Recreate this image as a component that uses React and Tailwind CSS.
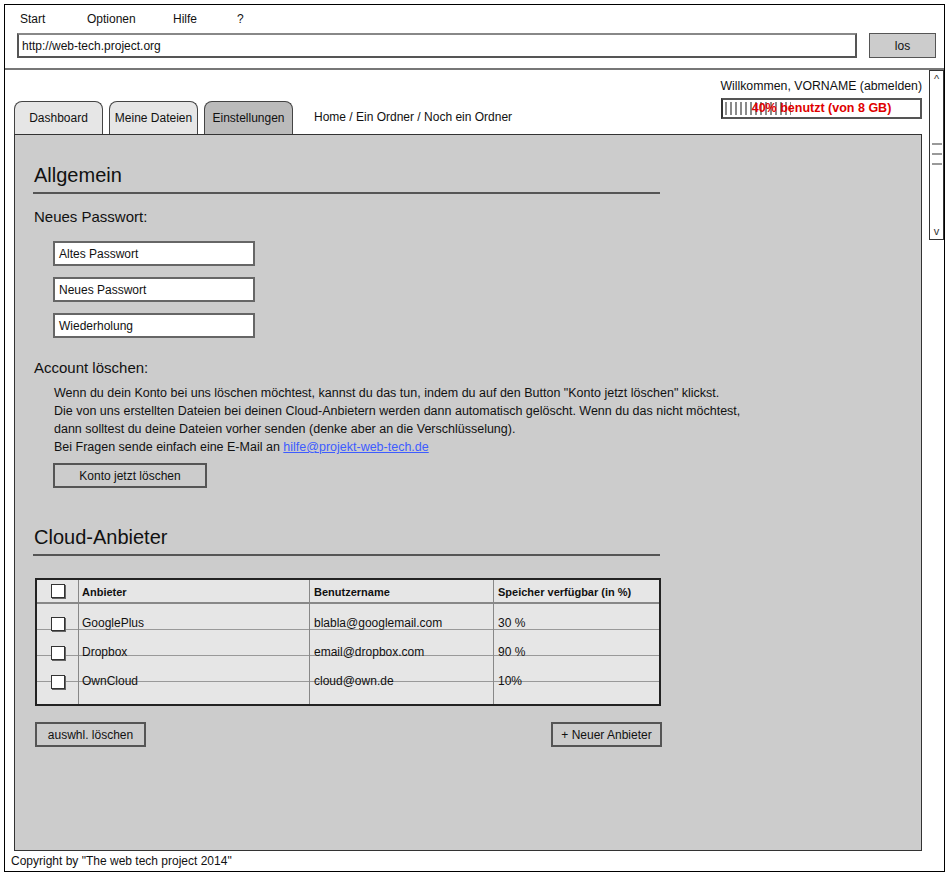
import React from 'react';

const font = { fontFamily: '"Liberation Sans", Arial, sans-serif' };

const providers = [
  { name: 'GooglePlus', user: 'blabla@googlemail.com', space: '30 %', pt: 'pt-[11px]', cb: 'pt-[13px]' },
  { name: 'Dropbox', user: 'email@dropbox.com', space: '90 %', pt: 'pt-[14px]', cb: 'pt-[16px]' },
  { name: 'OwnCloud', user: 'cloud@own.de', space: '10%', pt: 'pt-[17px]', cb: 'pt-[19px]' }
];

function Checkbox() {
  return <div className="w-[14px] h-[14px] bg-white border border-[#333] shadow-[1px_1px_0_#666]" />;
}

function Tab({ label, active }) {
  return (
    <div
      className={`w-[89px] h-[33px] flex items-center justify-center rounded-t-[8px] border border-b-0 border-[#444] text-[12px] text-[#111] ${
        active ? 'bg-[#bbbbbb]' : 'bg-[#e6e6e6]'
      }`}
    >
      {label}
    </div>
  );
}

function Section({ title }) {
  return (
    <div className="ml-[-1px] w-[627px] border-b-2 border-[#555] pb-[5px] pl-[1px] text-[20px] leading-[24px] text-[#111]">
      {title}
    </div>
  );
}

export default function App() {
  return (
    <div className="w-[949px] h-[876px] bg-white p-[4px]" style={font}>
      <div className="h-[868px] border border-black flex flex-col">
        {/* Browser-Leiste */}
        <div className="h-[65px] border-b-2 border-[#777]">
          <div className="h-[26px] flex items-center pt-[1px] pl-[15px] text-[12px] text-[#111]">
            <span className="w-[67px]">Start</span>
            <span className="w-[86px]">Optionen</span>
            <span className="w-[64px]">Hilfe</span>
            <span>?</span>
          </div>
          <div className="flex items-center gap-[12px] pl-[12px] mt-[2px]">
            <div className="w-[840px] h-[25px] border-2 border-[#555] border-t-[#888] flex items-center pl-[3px] text-[12px] text-[#111]">
              http://web-tech.project.org
            </div>
            <div className="w-[67px] h-[25px] bg-[#cccccc] border border-[#555] flex items-center justify-center text-[12px] text-[#111]">
              los
            </div>
          </div>
        </div>

        <div className="flex flex-1">
          <div className="flex-1 flex flex-col">
            {/* Tabs + Benutzer */}
            <div className="h-[64px] flex items-end justify-between pl-[9px] pr-[7px]">
              <div className="flex items-end gap-[6px]">
                <Tab label="Dashboard" />
                <Tab label="Meine Dateien" />
                <Tab label="Einstellungen" active />
                <span className="ml-[15px] mb-[8px] text-[12px] text-[#111]">Home / Ein Ordner / Noch ein Ordner</span>
              </div>
              <div className="self-start mt-[8px] flex flex-col items-end">
                <div className="text-[12.3px] leading-[16px] text-[#111]">Willkommen, VORNAME (abmelden)</div>
                <div className="relative mt-[4px] w-[201px] h-[21px] border-2 border-[#555] border-l-[#333] bg-white flex items-center justify-center">
                  <div className="absolute left-[2px] top-[2px] bottom-[2px] w-[66px] bg-[repeating-linear-gradient(90deg,#8a8a8a_0_2px,transparent_2px_5px)]" />
                  <span className="relative text-[12.5px] font-bold text-[#e00000]">40% benutzt (von 8 GB)</span>
                </div>
              </div>
            </div>

            {/* Inhalt */}
            <div className="ml-[9px] mr-[7px] h-[717px] border border-[#333] bg-[#cccccc] pl-[19px] pt-[28px] text-[#111]">
              <Section title="Allgemein" />
              <div className="mt-[13px] text-[15px] leading-[20px]">Neues Passwort:</div>
              <div className="ml-[19px] mt-[14px] flex flex-col gap-[11px]">
                {['Altes Passwort', 'Neues Passwort', 'Wiederholung'].map(p => (
                  <div key={p} className="w-[202px] h-[25px] bg-white border-2 border-[#666] flex items-center pl-[4px] text-[12px]">
                    {p}
                  </div>
                ))}
              </div>

              <div className="mt-[20px] text-[15px] leading-[20px]">Account löschen:</div>
              <div className="ml-[20px] mt-[6px] text-[12.5px] leading-[18px]">
                <p>Wenn du dein Konto bei uns löschen möchtest, kannst du das tun, indem du auf den Button "Konto jetzt löschen" klickst.</p>
                <p>Die von uns erstellten Dateien bei deinen Cloud-Anbietern werden dann automatisch gelöscht. Wenn du das nicht möchtest,</p>
                <p>dann solltest du deine Dateien vorher senden (denke aber an die Verschlüsselung).</p>
                <p>
                  Bei Fragen sende einfach eine E-Mail an{' '}
                  <span className="text-[#3d5cff] underline">hilfe@projekt-web-tech.de</span>
                </p>
              </div>
              <div className="ml-[19px] mt-[7px] w-[154px] h-[25px] border-2 border-[#555] bg-[#cccccc] flex items-center justify-center text-[12px]">
                Konto jetzt löschen
              </div>

              <div className="mt-[37px]">
                <Section title="Cloud-Anbieter" />
              </div>

              {/* Tabelle */}
              <div className="ml-[1px] mt-[22px] w-[626px] border-2 border-[#222] bg-[#e6e6e6] text-[12px]">
                <div className="grid grid-cols-[42px_231px_184px_1fr] h-[24px] border-b-2 border-[#888]">
                  <div className="flex items-center justify-center border-r border-[#888]"><Checkbox /></div>
                  <div className="flex items-center pt-[3px] pl-[3px] font-bold text-[11px] border-r border-[#888]">Anbieter</div>
                  <div className="flex items-center pt-[3px] pl-[4px] font-bold text-[11px] border-r border-[#888]">Benutzername</div>
                  <div className="flex items-center pt-[3px] pl-[4px] font-bold text-[11px]">Speicher verfügbar (in %)</div>
                </div>
                {providers.map(r => (
                  <div key={r.name} className="grid grid-cols-[42px_231px_184px_1fr] h-[26px] border-b border-[#999]">
                    <div className={`flex justify-center border-r border-[#888] ${r.cb}`}><div className="h-[14px]"><Checkbox /></div></div>
                    <div className={`pl-[3px] leading-[16px] whitespace-nowrap border-r border-[#888] ${r.pt}`}><div className="h-[10px]">{r.name}</div></div>
                    <div className={`pl-[4px] leading-[16px] whitespace-nowrap border-r border-[#888] ${r.pt}`}><div className="h-[10px]">{r.user}</div></div>
                    <div className={`pl-[4px] leading-[16px] whitespace-nowrap ${r.pt}`}><div className="h-[10px]">{r.space}</div></div>
                  </div>
                ))}
                <div className="grid grid-cols-[42px_231px_184px_1fr] h-[22px]">
                  <div className="border-r border-[#888]" />
                  <div className="border-r border-[#888]" />
                  <div className="border-r border-[#888]" />
                  <div />
                </div>
              </div>

              <div className="ml-[1px] mt-[16px] w-[627px] flex justify-between">
                <div className="w-[111px] h-[25px] border-2 border-[#555] flex items-center justify-center text-[12px]">auswhl. löschen</div>
                <div className="w-[111px] h-[25px] border-2 border-[#555] flex items-center justify-center text-[12px]">+ Neuer Anbieter</div>
              </div>
            </div>

            <div className="pl-[6px] mt-[3px] text-[12px] leading-[14px] text-[#111]">Copyright by "The web tech project 2014"</div>
          </div>

          {/* Scrollbar */}
          <div className="w-[15px] h-[170px] border border-[#333] flex flex-col items-center text-[11px] leading-[12px] text-[#333]">
            <span className="mt-[2px]">^</span>
            <div className="flex flex-col gap-[8px] w-[10px] mt-[58px]">
              <div className="h-[2px] bg-[#999]" />
              <div className="h-[2px] bg-[#999]" />
              <div className="h-[2px] bg-[#999]" />
            </div>
            <span className="mb-[2px] mt-auto">v</span>
          </div>
        </div>
      </div>
    </div>
  );
}
